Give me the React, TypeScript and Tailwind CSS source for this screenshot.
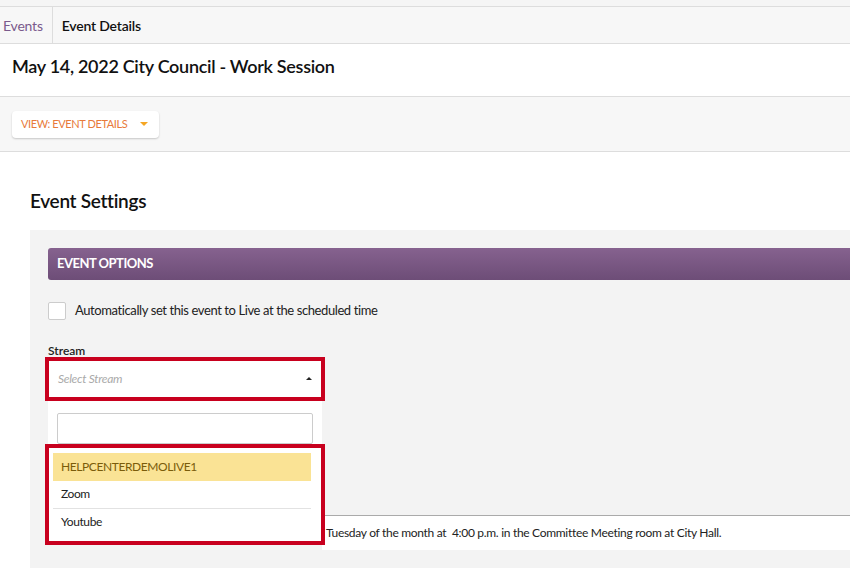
export default function App() {
  return (
    <div className="w-[850px] h-[568px] overflow-hidden bg-white text-[#222]" style={{ fontFamily: "Lato, 'Liberation Sans', sans-serif" }}>
      <div className="h-[6px] bg-[#f5f5f5]" />
      <div className="h-[38px] flex items-stretch border-t border-b border-[#ddd] bg-[#f7f7f7] text-[14px] tracking-[-0.2px]">
        <div className="px-[3px] flex items-center text-[#7a5a8c] border-r border-[#ddd] pr-[9px]">Events</div>
        <div className="px-[9px] flex items-center font-semibold text-[#111]">Event Details</div>
      </div>
      <div className="h-[53px] flex items-center px-[12px] pb-[8px] border-b border-[#ddd] bg-white">
        <h1 className="text-[18px] font-semibold text-[#111] tracking-[-0.3px]">May 14, 2022 City Council - Work Session</h1>
      </div>
      <div className="h-[55px] flex items-center px-[12px] bg-[#f7f7f7] border-b border-[#ddd]">
        <div className="h-[27px] w-[147px] whitespace-nowrap bg-white rounded shadow-[0_1px_2px_rgba(0,0,0,0.2)] flex items-center px-[9px] text-[11px] tracking-[-0.4px] text-[#e87a3a]">
          VIEW: EVENT DETAILS
          <span className="ml-[13px] w-0 h-0 border-l-[4px] border-r-[4px] border-t-[4px] border-l-transparent border-r-transparent border-t-[#f5a623]" />
        </div>
      </div>
      <div className="pl-[30px] pt-[36px]">
        <h2 className="text-[19px] font-semibold text-[#111] h-[43px] -mt-[1px] tracking-[-0.3px]">Event Settings</h2>
        <div className="bg-[#f3f3f3] pl-[18px] pt-[18px] h-[400px] relative">
          <div className="h-[32px] rounded-l-[3px] bg-gradient-to-b from-[#86628f] to-[#6d4d77] flex items-center px-[9px] text-white text-[13px] font-bold tracking-[-0.5px]">EVENT OPTIONS</div>
          <div className="flex items-center mt-[21px] text-[13px] tracking-[-0.4px]">
            <div className="w-[18px] h-[18px] bg-white border border-[#ccc] rounded-[2px]" />
            <span className="ml-[9px]">Automatically set this event to Live at the scheduled time</span>
          </div>
          <div className="mt-[22px] text-[12px] font-semibold leading-[15px]">Stream</div>
          <div className="relative w-[280px] -ml-[3px] mt-[-1px]">
            <div className="h-[44px] border-[4px] border-[#c8001e] bg-white flex items-center justify-between px-[9px] text-[12px] italic text-[#aaa] tracking-[-0.3px]">
              Select Stream
              <span className="w-0 h-0 border-l-[3px] border-r-[3px] border-b-[3px] border-l-transparent border-r-transparent border-b-[#222]" />
            </div>
            <div className="absolute left-[3px] top-[44px] w-[274px] bg-white z-10 pt-[12px]">
              <div className="mx-[9px] h-[31px] border border-[#ccc] rounded-[2px]" />
            </div>
            <div className="absolute left-0 top-[87px] w-[280px] h-[101px] border-[4px] border-[#c8001e] bg-white z-20 px-[4px] pt-[5px] text-[12px] tracking-[-0.4px]">
              <div className="h-[28px] w-[258px] bg-[#fae395] text-[#7a5c0a] flex items-center px-[8px]">HELPCENTERDEMOLIVE1</div>
              <div className="h-[28px] w-[258px] flex items-center px-[8px] border-b border-[#e2e2e2]">Zoom</div>
              <div className="h-[27px] flex items-center px-[8px]">Youtube</div>
            </div>
          </div>
          <div className="absolute left-[292px] top-[285px] right-0 h-[35px] bg-white border-t border-[#aaa] flex items-center pl-[4px] text-[12px] tracking-[-0.3px]">
            Tuesday of the month at&nbsp; 4:00 p.m. in the Committee Meeting room at City Hall.
          </div>
        </div>
      </div>
    </div>
  );
}
